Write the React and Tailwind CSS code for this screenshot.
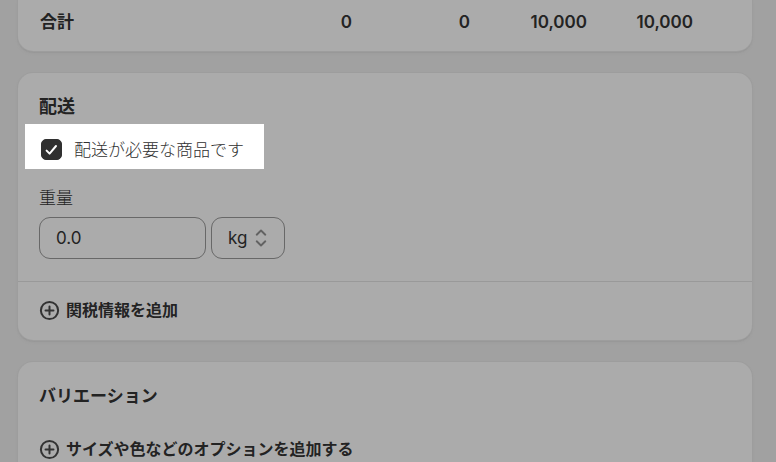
import React, { useState } from "react";

const totals = ["0", "0", "10,000", "10,000"];

function Card({ className, children }) {
  return (
    <section
      className={
        "bg-[#ababab] shadow-[0_0_0_1px_#9d9d9d,0_1px_1px_#858585,0_2px_3px_#989898] " +
        className
      }
    >
      {children}
    </section>
  );
}

function AddButton({ children }) {
  return (
    <button
      type="button"
      className="flex items-center gap-[6px] text-[16px] leading-[24px] font-semibold"
    >
      <svg
        viewBox="0 0 20 20"
        className="size-[21px] fill-none stroke-[#333333] stroke-[1.9]"
        strokeLinecap="round"
        aria-hidden="true"
      >
        <circle cx="10" cy="10" r="8.2" />
        <path d="M10 6.2v7.6M6.2 10h7.6" />
      </svg>
      {children}
    </button>
  );
}

export default function App() {
  const [shipping, setShipping] = useState(true);
  const [weight, setWeight] = useState("0.0");
  const [unit, setUnit] = useState("kg");

  return (
    <main className="flex h-screen flex-col gap-[22px] overflow-hidden bg-[#a1a1a1] pr-[24px] pl-[18px] font-['Inter','Noto_Sans_CJK_JP',sans-serif] text-[#232323]">
      <Card className="shrink-0 rounded-b-[15px] pt-[10px] pr-[59px] pb-[17px] pl-[22px]">
        <table className="w-full table-fixed text-right text-[17px] leading-[24px] font-semibold">
          <colgroup>
            <col />
            <col className="w-[118px]" />
            <col className="w-[118px]" />
            <col className="w-[117px]" />
            <col className="w-[106px]" />
          </colgroup>
          <tbody>
            <tr>
              <th scope="row" className="text-left font-semibold">
                合計
              </th>
              {totals.map((value, index) => (
                <td key={index}>{value}</td>
              ))}
            </tr>
          </tbody>
        </table>
      </Card>

      <Card className="shrink-0 rounded-[15px]">
        <div className="px-[21px] pt-[22px] pb-[22px]">
          <h2 className="text-[18px] leading-[24px] font-bold">配送</h2>
          <label className="-ml-[14px] mt-[5px] flex h-[45px] w-fit items-center gap-[12px] bg-white pt-[6px] pr-[20px] pl-[16px] text-[17px] leading-[24px] font-light text-[#303030]">
            <span className="grid size-[21px]">
              <input
                type="checkbox"
                checked={shipping}
                onChange={(e) => setShipping(e.target.checked)}
                className="peer col-start-1 row-start-1 size-[21px] appearance-none rounded-[5px] border border-[#303030] checked:bg-[#303030]"
              />
              <svg
                viewBox="0 0 21 21"
                className="pointer-events-none invisible col-start-1 row-start-1 fill-none stroke-white stroke-2 peer-checked:visible"
                strokeLinecap="round"
                strokeLinejoin="round"
                aria-hidden="true"
              >
                <path d="M5.6 11.6L8.6 14.6L15 7" />
              </svg>
            </span>
            配送が必要な商品です
          </label>
          <label
            htmlFor="weight"
            className="mt-[17px] mb-[7px] block w-fit text-[17px] leading-[24px] font-light text-[#232323]"
          >
            重量
          </label>
          <div className="flex gap-[5px] text-[17px] leading-[24px]">
            <input
              id="weight"
              type="text"
              value={weight}
              onChange={(e) => setWeight(e.target.value)}
              className="h-[42px] w-[167px] rounded-[11px] border border-[#686868] px-[16px]"
            />
            <div className="grid h-[42px] w-[74px] items-center">
              <select
                aria-label="重量の単位"
                value={unit}
                onChange={(e) => setUnit(e.target.value)}
                className="col-start-1 row-start-1 h-full w-full appearance-none rounded-[11px] border border-[#686868] pl-[16px]"
              >
                <option>kg</option>
                <option>g</option>
                <option>lb</option>
                <option>oz</option>
              </select>
              <svg
                viewBox="0 0 12 18"
                className="pointer-events-none col-start-1 row-start-1 mr-[18px] h-[18px] w-[12px] justify-self-end fill-none stroke-[#626262] stroke-[1.9]"
                strokeLinecap="round"
                strokeLinejoin="round"
                aria-hidden="true"
              >
                <path d="M1.7 5.7L6 1.5l4.3 4.2M1.7 12.3L6 16.5l4.3-4.2" />
              </svg>
            </div>
          </div>
        </div>
        <div className="border-t border-[#999999] px-[21px] pt-[16px] pb-[18px]">
          <AddButton>関税情報を追加</AddButton>
        </div>
      </Card>

      <Card className="shrink-0 rounded-[15px] px-[21px] pt-[22px] pb-[17px]">
        <h2 className="mb-[29px] text-[17px] leading-[24px] font-semibold">
          バリエーション
        </h2>
        <AddButton>サイズや色などのオプションを追加する</AddButton>
      </Card>
    </main>
  );
}
